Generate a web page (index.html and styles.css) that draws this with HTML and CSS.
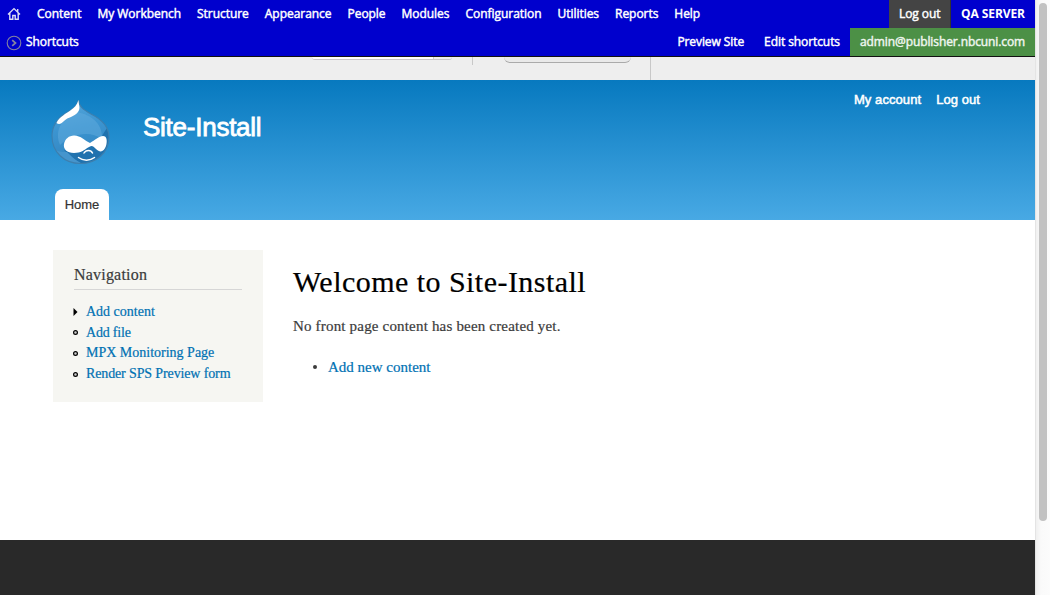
FILE: index.html
```html
<!DOCTYPE html>
<html lang="en">
<head>
<meta charset="utf-8">
<title>Welcome to Site-Install</title>
<link rel="stylesheet" href="styles.css">
</head>
<body>
<div class="viewport">
<div class="page">
  <div class="toolbar">
    <div class="bar">
      <svg class="home-icon" width="14" height="14" viewBox="0 0 14 14" fill="none" stroke="#dcdcf4" stroke-width="1.4"><path d="M1 7.4 7 1.6l6 5.8M2.8 6v6.3h3V8.5h2.4v3.8h3V6M10.7 4.8V2"/></svg>
      <nav class="menu">
        <a>Content</a><a>My Workbench</a><a>Structure</a><a>Appearance</a><a>People</a><a>Modules</a><a>Configuration</a><a>Utilities</a><a>Reports</a><a>Help</a>
      </nav>
      <a class="logout">Log out</a>
      <a class="server">QA SERVER</a>
    </div>
    <div class="bar">
      <svg class="shortcut-icon" width="16" height="16" viewBox="0 0 16 16" fill="none" stroke="#8583a0"><circle cx="8" cy="8" r="6.8" stroke-width="1.1"/><path d="m6.2 5.2 3.3 2.8-3.3 2.8" stroke-width="1.7"/></svg>
      <a class="shortcuts">Shortcuts</a>
      <a class="preview">Preview Site</a>
      <a class="edit">Edit shortcuts</a>
      <a class="user">admin@publisher.nbcuni.com</a>
    </div>
  </div>
  <div class="strip">
    <span class="field"></span><span class="tick"></span><span class="button"></span><span class="divider"></span>
  </div>
  <header class="header">
    <div class="brand">
      <svg class="logo" width="60" height="66" viewBox="0 0 60 66">
        <defs>
          <linearGradient id="drop" x1="0" y1="0" x2="0.2" y2="1"><stop offset="0" stop-color="#5aa9dc"/><stop offset=".5" stop-color="#3b94d0"/><stop offset="1" stop-color="#3385c0"/></linearGradient>
          <clipPath id="shape"><path d="M28.500 1C29 8 34 11 41 15C51 20 59 28 59 38C59 54 46 64.500 30.500 64.500C14 64.500 2 53 2 37C2 26 8 19 16 14C22 10.500 27 8 28.500 1Z"/></clipPath>
        </defs>
        <g clip-path="url(#shape)">
          <path fill="url(#drop)" d="M0 0h60v66H0z"/>
          <path fill="#2072ae" d="M60 26C52 33 51 43 46 45C38 50 20 52 14 51L20 57L33 66H60Z"/>
          <path fill="#62abdd" opacity=".5" d="M27 13C42 16 53 25 52 40C39 31 22 35 10 46C4 31 12 19 27 13Z"/>
          <path fill="#4595cd" d="M2 49C7 53 12 53 17 53C22 58 26 62 33 65H15Z"/>
        </g>
        <path fill="none" stroke="#3d7fae" stroke-width="1.100" d="M28.500 1C29 8 34 11 41 15C51 20 59 28 59 38C59 54 46 64.500 30.500 64.500C14 64.500 2 53 2 37C2 26 8 19 16 14C22 10.500 27 8 28.500 1Z"/>
        <path fill="#fff" d="M28.500 1C28.500 6 31 9 28 13C24 18 18 18 14 22C11 25 9 26 6.500 24C9 18 17 14 21 11C24 9 27 6 28.500 1Z"/>
        <path fill="#fff" d="M24 36.500C31 36.500 35 42 40 44C45 41 49 37 53 37C57 37 57.500 42 56 47C54 53 50 54 46 50C43 47 42 46 39 48C34 51 31 54 24 54C17 54 13 50 14 45C15 40 19 36.500 24 36.500Z"/>
        <path fill="none" stroke="#fff" stroke-width="1.500" stroke-linecap="round" d="M34 54C36 50.500 41 50.500 42.500 54M28.500 58.500C33 62 40 62 44.500 58.500"/>
      </svg>
      <div class="site-name">Site-Install</div>
      <nav class="account"><a>My account</a><a>Log out</a></nav>
    </div>
    <a class="tab">Home</a>
  </header>
  <main class="main">
    <aside class="sidebar">
      <h2 class="side-title">Navigation</h2>
      <ul class="side-list">
        <li><svg width="5" height="8" viewBox="0 0 5 8"><path d="M.5 0 4.500 4 .5 8z"/></svg><a>Add content</a></li>
        <li><svg width="5" height="5" viewBox="0 0 5 5"><circle cx="2.500" cy="2.500" r="1.900" fill="#ccc" stroke="#000" stroke-width="1.200"/></svg><a class="file">Add file</a></li>
        <li><svg width="5" height="5" viewBox="0 0 5 5"><circle cx="2.500" cy="2.500" r="1.900" fill="#ccc" stroke="#000" stroke-width="1.200"/></svg><a>MPX Monitoring Page</a></li>
        <li><svg width="5" height="5" viewBox="0 0 5 5"><circle cx="2.500" cy="2.500" r="1.900" fill="#ccc" stroke="#000" stroke-width="1.200"/></svg><a class="render">Render SPS Preview form</a></li>
      </ul>
    </aside>
    <section class="content">
      <h1 class="title">Welcome to Site-Install</h1>
      <p class="lead">No front page content has been created yet.</p>
      <div class="action"><span class="dot"></span><a>Add new content</a></div>
    </section>
  </main>
  <footer class="footer"></footer>
</div>
<div class="scrollbar"><div class="thumb"></div></div>
</div>
</body>
</html>
```
FILE: styles.css
```css
* { box-sizing: border-box; }
body { margin: 0; background: #fff; overflow: hidden; }
a { white-space: nowrap; }
.viewport { display: flex; width: 1050px; height: 595px; }
.page { width: 1035px; display: flex; flex-direction: column; }
.toolbar { height: 57px; background: #0000cd; border-bottom: 1px solid #111; font: 400 12px/28px "Open Sans", sans-serif; letter-spacing: -.08px; color: #fff; -webkit-text-stroke: .45px currentColor; }
.bar { display: flex; height: 28px; }
.home-icon { margin: 7px 16px 0 7px; }
.menu { display: flex; gap: 16px; flex: 1; letter-spacing: -.04px; }
.logout { background: #444; width: 62px; padding-left: 10px; border-right: 1px solid #333; }
.server { width: 84px; padding-left: 10px; font-weight: 700; -webkit-text-stroke: 0; }
.shortcut-icon { margin: 7px 4px 0 6px; }
.shortcuts { flex: 1; }
.preview { margin-right: 20px; }
.edit { margin-right: 10px; }
.user { background: #4c9046; width: 185px; padding-left: 10px; color: #eef5ee; letter-spacing: -.1px; }
.strip { display: flex; align-items: flex-start; height: 23px; background: #eee; overflow: hidden; }
.field { margin-left: 312px; width: 140px; height: 3px; background: linear-gradient(90deg, #fff 121px, #ccc 121px, #ccc 122px, #eee 122px); border-bottom: 1px solid #c9c4c9; border-radius: 0 0 4px 4px; }
.tick { margin-left: 20px; width: 1px; height: 8px; background: #c8c8c8; }
.button { margin-left: 31px; width: 127px; height: 6px; border-bottom: 1px solid #aaa; border-radius: 0 0 14px 14px; background: #e9e9e9; }
.divider { margin-left: 19px; width: 1px; height: 23px; background: #c8c8c8; }
.header { display: flex; flex-direction: column; height: 140px; background: linear-gradient(#0779bf, #48a9e4); color: #fff; font-family: "Liberation Sans", Arial, sans-serif; }
.brand { display: flex; align-items: flex-start; height: 109px; padding-left: 50px; }
.logo { margin-top: 19px; }
.site-name { margin: 32px 0 0 33px; flex: 1; font-size: 26px; line-height: 30px; letter-spacing: -.25px; -webkit-text-stroke: .8px #fff; }
.account { display: flex; gap: 15px; margin: 11px 55px 0 0; font-size: 13px; line-height: 18px; letter-spacing: .07px; -webkit-text-stroke: .5px #fff; }
.tab { width: 54px; height: 31px; margin-left: 55px; border-radius: 8px 8px 0 0; background: #fff; color: #333; text-align: center; font-size: 13px; line-height: 31px; -webkit-text-stroke: .2px #333; }
.main { display: flex; align-items: flex-start; height: 320px; padding: 30px 0 0 53px; font-family: "Liberation Serif", serif; color: #3b3b3b; -webkit-text-stroke: .2px currentColor; }
.sidebar { width: 210px; height: 152px; padding: 15px 21px; background: #f6f6f2; }
.side-title { margin: 0 0 12px; height: 25px; border-bottom: 1px solid #d6d6d6; font-size: 16px; font-weight: 400; line-height: 20px; letter-spacing: .2px; }
.side-list { margin: 0; padding: 0; list-style: none; color: #0071b3; font-size: 14px; line-height: 20.6px; }
.side-list li { display: flex; align-items: center; height: 20.6px; gap: 8px; margin-left: -1px; }
.side-list .file { letter-spacing: -.2px; }
.side-list .render { letter-spacing: -.13px; }
.content { margin-left: 30px; }
.title { margin: 14px 0 0; font-size: 30px; font-weight: 400; line-height: 36px; color: #000; letter-spacing: .46px; }
.lead { margin: 16px 0 0; font-size: 15px; line-height: 20px; letter-spacing: .18px; }
.action { display: flex; align-items: center; margin: 21px 0 0 20px; gap: 11px; font-size: 15px; line-height: 20px; color: #0071b3; }
.dot { width: 4px; height: 4px; border-radius: 50%; background: #3b3b3b; }
.footer { height: 55px; background: #292929; }
.scrollbar { width: 15px; height: 595px; padding: 3px 0 0 4px; background: linear-gradient(90deg, #f0f0f0, #fafafa 5px, #fcfcfc); border-left: 1px solid #e4e4e4; }
.thumb { width: 8px; height: 518px; border-radius: 4px; background: #c2c2c2; margin-left: -1px; }
```
